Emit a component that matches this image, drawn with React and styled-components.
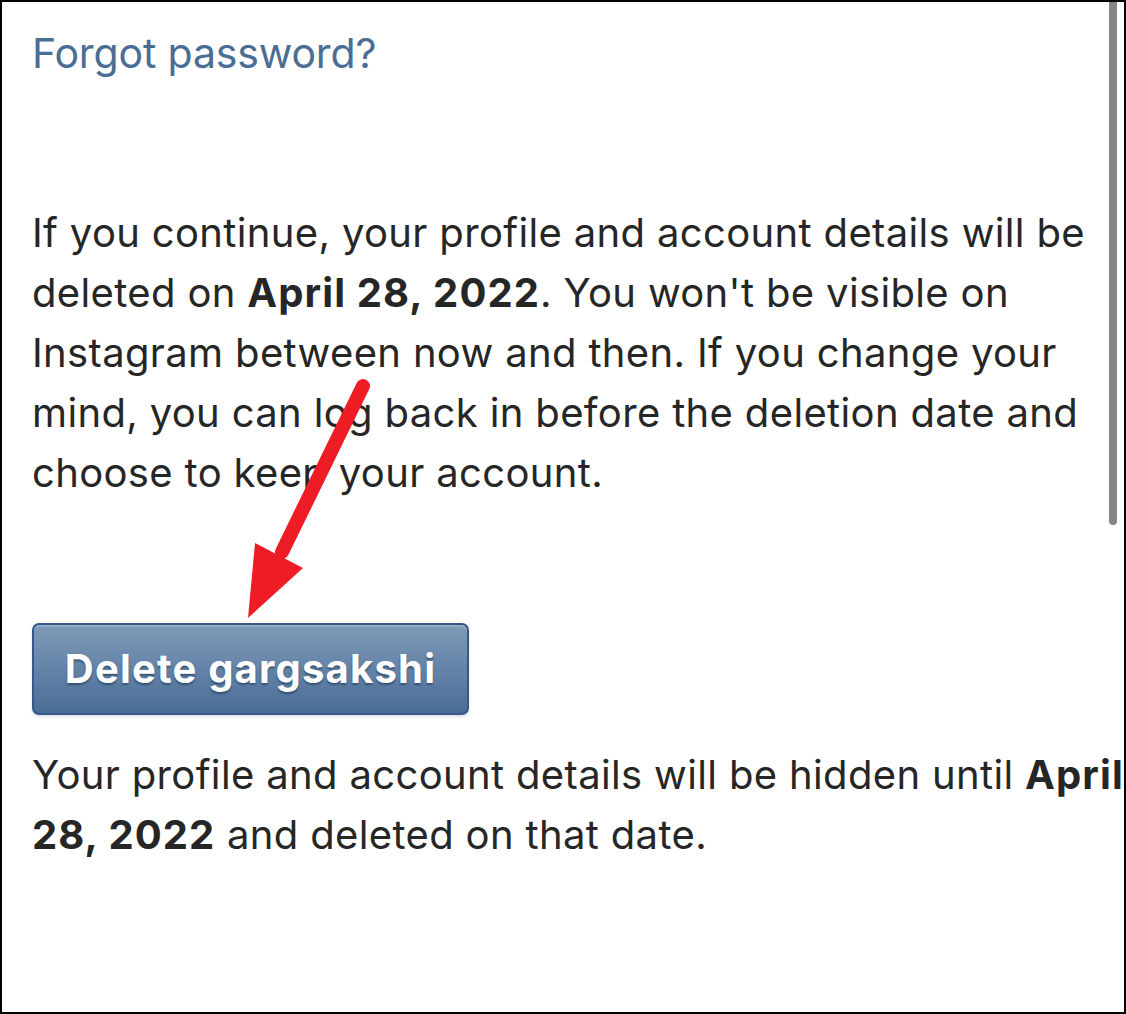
import React from 'react'
import styled, { createGlobalStyle } from 'styled-components'

const GlobalStyle = createGlobalStyle`
  html, body {
    margin: 0;
    padding: 0;
    background: #ffffff;
  }
  body {
    font-family: Inter, "Noto Sans", "Liberation Sans", sans-serif;
  }
`

const Frame = styled.div`
  position: relative;
  width: 1126px;
  height: 1014px;
  box-sizing: border-box;
  border: 2px solid #000;
  overflow: hidden;
  background: #fff;
`

const Content = styled.div`
  display: flex;
  flex-direction: column;
  align-items: flex-start;
  padding: 21px 0 0 30px;
`

const ForgotLink = styled.a`
  font-size: 41px;
  line-height: 60px;
  color: #4a6d93;
  text-decoration: none;
  letter-spacing: -0.15px;
`

const Paragraph = styled.p`
  margin: ${({ $top }) => $top}px 0 0 0;
  font-size: 40px;
  line-height: 60px;
  color: #262626;
  letter-spacing: 0.35px;
  white-space: nowrap;

  b {
    font-weight: 700;
    letter-spacing: 1.1px;
  }
`

const DeleteButton = styled.button`
  margin-top: 120px;
  width: 437px;
  height: 92px;
  box-sizing: border-box;
  border: 2px solid #34598a;
  border-radius: 7px;
  background: linear-gradient(#7f9ab8, #4a6d96);
  box-shadow: inset 0 2px 0 rgba(255, 255, 255, 0.18), 0 2px 3px rgba(0, 0, 0, 0.12);
  color: #fff;
  font-family: Inter, "Noto Sans", "Liberation Sans", sans-serif;
  font-size: 40px;
  font-weight: 700;
  letter-spacing: 1.2px;
  text-shadow: 0 2px 2px rgba(20, 45, 80, 0.55);
  padding: 0 0 2px 0;
  cursor: pointer;
`

const Scrollbar = styled.div`
  position: absolute;
  top: -4px;
  right: 7px;
  width: 8px;
  height: 527px;
  border-radius: 4px;
  background: #858585;
`

const ArrowLayer = styled.svg`
  position: absolute;
  left: 0;
  top: 0;
  pointer-events: none;
`

const App = () => {
  return (
    <>
      <GlobalStyle />
      <Frame>
        <Content>
          <ForgotLink href="#">Forgot password?</ForgotLink>
          <Paragraph $top={120}>
            If you continue, your profile and account details will be
            <br />
            deleted on <b>April 28, 2022</b>. You won't be visible on
            <br />
            Instagram between now and then. If you change your
            <br />
            mind, you can log back in before the deletion date and
            <br />
            choose to keep your account.
          </Paragraph>
          <DeleteButton>Delete gargsakshi</DeleteButton>
          <Paragraph $top={30}>
            Your profile and account details will be hidden until <b>April</b>
            <br />
            <b>28, 2022</b> and deleted on that date.
          </Paragraph>
        </Content>
        <Scrollbar />
        <ArrowLayer width="1126" height="1014" viewBox="0 0 1126 1014">
          <line x1="361" y1="384" x2="280" y2="550" stroke="#ee1d25" strokeWidth="14" strokeLinecap="round" />
          <polygon points="253,541 301,566 246,616" fill="#ee1d25" />
        </ArrowLayer>
      </Frame>
    </>
  )
}

export default App
